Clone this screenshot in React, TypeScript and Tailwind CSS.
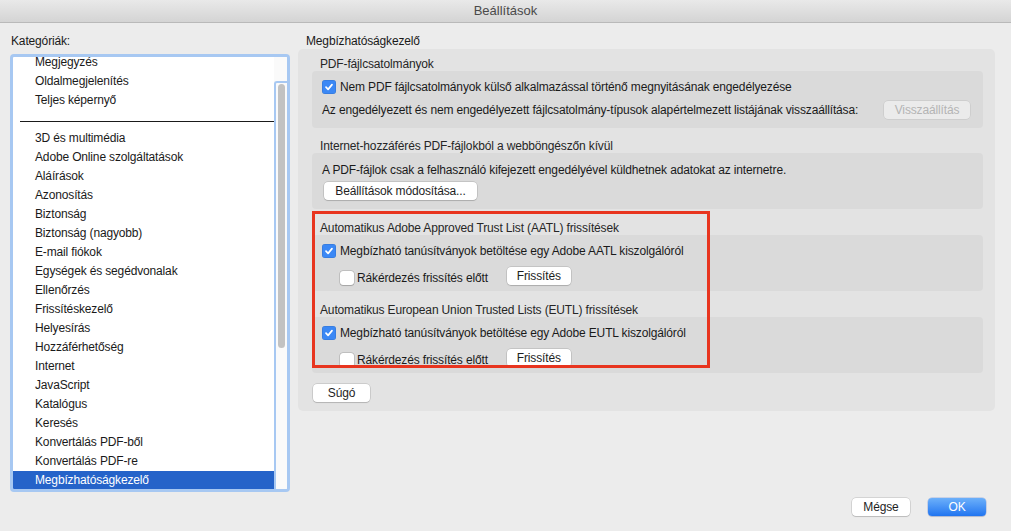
import React from 'react'

const FONT = "font-['Liberation_Sans','Helvetica_Neue',Arial,sans-serif]"

const CATEGORIES_TOP = ['Megjegyzés', 'Oldalmegjelenítés', 'Teljes képernyő']
const CATEGORIES = [
  '3D és multimédia',
  'Adobe Online szolgáltatások',
  'Aláírások',
  'Azonosítás',
  'Biztonság',
  'Biztonság (nagyobb)',
  'E-mail fiókok',
  'Egységek és segédvonalak',
  'Ellenőrzés',
  'Frissítéskezelő',
  'Helyesírás',
  'Hozzáférhetőség',
  'Internet',
  'JavaScript',
  'Katalógus',
  'Keresés',
  'Konvertálás PDF-ből',
  'Konvertálás PDF-re',
]

function Checkbox({ checked }: { checked?: boolean }) {
  if (checked) {
    return (
      <span className="w-[14px] h-[14px] rounded-[3px] bg-[#3b88f5] flex items-center justify-center shrink-0 shadow-[inset_0_0_0_0.5px_rgba(0,0,0,0.15)]">
        <svg width="10" height="10" viewBox="0 0 10 10">
          <path d="M2 5.2 L4.1 7.4 L8 2.6" fill="none" stroke="white" strokeWidth="1.7" strokeLinecap="round" strokeLinejoin="round" />
        </svg>
      </span>
    )
  }
  return (
    <span className="w-[14px] h-[14px] rounded-[3px] bg-white shrink-0 shadow-[0_0_0_0.5px_rgba(0,0,0,0.22),0_0.5px_1px_rgba(0,0,0,0.15)]" />
  )
}

function Button({ children, className = '', disabled }: { children: React.ReactNode; className?: string; disabled?: boolean }) {
  return (
    <div
      className={`h-[18px] rounded-[4px] flex items-center justify-center text-[12px] leading-none shrink-0 ${
        disabled
          ? 'bg-[#ebebeb] text-[#b4b4b4] shadow-[0_0_0_0.5px_rgba(0,0,0,0.1)]'
          : 'bg-white text-[#1e1e1e] shadow-[0_0_0_0.5px_rgba(0,0,0,0.2),0_1px_1px_rgba(0,0,0,0.12)]'
      } ${className}`}
    >
      {children}
    </div>
  )
}

// title sits 7px above its group box
function SectionTitle({ children, pt }: { children: React.ReactNode; pt: string }) {
  return <div className={`${pt} pl-[22px] leading-[14px] text-[#262626]`}>{children}</div>
}

function Group({ children, className = '' }: { children: React.ReactNode; className?: string }) {
  return <div className={`ml-[14px] mr-[12px] rounded-[4px] bg-[#dadada] ${className}`}>{children}</div>
}

function TrustGroup({ server }: { server: string }) {
  return (
    <Group className="h-[56px] pt-[8px] pl-[10px] flex flex-col gap-[8px]">
      <div className="flex items-center gap-[4px] h-[16px]">
        <Checkbox checked />
        <span>Megbízható tanúsítványok betöltése egy Adobe {server} kiszolgálóról</span>
      </div>
      <div className="flex items-center h-[18px] pl-[18px]">
        <div className="flex items-center gap-[3px] mt-[4px]">
          <Checkbox />
          <span>Rákérdezés frissítés előtt</span>
        </div>
        <Button className="w-[64px] ml-[19px]">Frissítés</Button>
      </div>
    </Group>
  )
}

export default function App() {
  return (
    <div className={`w-[1011px] h-[531px] bg-[#ececec] flex flex-col overflow-hidden text-[12px] tracking-[-0.15px] text-[#1a1a1a] ${FONT}`}>
      {/* Title bar */}
      <div className="h-[23px] shrink-0 bg-gradient-to-b from-[#e9e9e9] to-[#d4d4d4] border-b border-[#b9b9b9] flex items-center justify-center text-[13px] tracking-normal text-[#4a4a4a]">
        Beállítások
      </div>

      <div className="flex pt-[11px] pl-[10px]">
        {/* Left column */}
        <div className="w-[280px] flex flex-col">
          <div className="leading-[15px] pl-[1px]">Kategóriák:</div>
          <div className="mt-[5px] h-[438px] rounded-[4px] border-[3px] border-[#a7c8f2] bg-white flex overflow-hidden">
            <div className="flex-1 flex flex-col overflow-hidden">
              <div className="-mt-[4px]">
                {CATEGORIES_TOP.map((c) => (
                  <div key={c} className="h-[19px] leading-[19px] pl-[22px]">{c}</div>
                ))}
                <div className="h-[19px] flex items-center pl-[7px]">
                  <div className="h-px w-full bg-[#1a1a1a] mt-[3px]" />
                </div>
                {CATEGORIES.map((c) => (
                  <div key={c} className="h-[19px] leading-[19px] pl-[22px]">{c}</div>
                ))}
                <div className="h-[19px] leading-[19px] pl-[22px] bg-[#2563c9] text-white">Megbízhatóságkezelő</div>
              </div>
            </div>
            <div className="w-[13px] bg-[#fafafa] pt-[24px] flex">
              <div className="flex-1 border-l-2 border-t-2 border-[#a7c8f2] rounded-tl-[3px] pl-[2px] pt-[1px]">
                <div className="w-[7px] h-[264px] rounded-full bg-[#c2c2c2]" />
              </div>
            </div>
          </div>
        </div>

        {/* Right column */}
        <div className="ml-[8px] w-[697px] flex flex-col">
          <div className="leading-[15px] pl-[8px]">Megbízhatóságkezelő</div>
          <div className="relative rounded-[5px] bg-[#e3e3e3] flex flex-col pb-[9px]">
            <SectionTitle pt="pt-[8px]">PDF-fájlcsatolmányok</SectionTitle>
            <Group className="h-[57px] pt-[8px] pl-[10px] pr-[12px] flex flex-col gap-[6px]">
              <div className="flex items-center gap-[4px] h-[16px]">
                <Checkbox checked />
                <span>Nem PDF fájlcsatolmányok külső alkalmazással történő megnyitásának engedélyezése</span>
              </div>
              <div className="flex items-center justify-between h-[18px]">
                <span>Az engedélyezett és nem engedélyezett fájlcsatolmány-típusok alapértelmezett listájának visszaállítása:</span>
                <Button disabled className="w-[86px] mr-[1px]">Visszaállítás</Button>
              </div>
            </Group>

            <SectionTitle pt="pt-[11px]">Internet-hozzáférés PDF-fájlokból a webböngészőn kívül</SectionTitle>
            <Group className="h-[56px] pt-[9px] pl-[10px] flex flex-col gap-[4px]">
              <div className="h-[16px] leading-[16px]">A PDF-fájlok csak a felhasználó kifejezett engedélyével küldhetnek adatokat az internetre.</div>
              <Button className="w-[153px] ml-[2px]">Beállítások módosítása...</Button>
            </Group>

            <SectionTitle pt="pt-[12px]">Automatikus Adobe Approved Trust List (AATL) frissítések</SectionTitle>
            <TrustGroup server="AATL" />

            <SectionTitle pt="pt-[12px]">Automatikus European Union Trusted Lists (EUTL) frissítések</SectionTitle>
            <TrustGroup server="EUTL" />

            <div className="pt-[11px] pl-[15px]">
              <Button className="w-[57px]">Súgó</Button>
            </div>

            {/* annotation highlight */}
            <div className="absolute left-[14px] top-[162px] w-[398px] h-[157px] border-[3px] border-[#e8351f] pointer-events-none" />
          </div>
        </div>
      </div>

      {/* Footer */}
      <div className="mt-[6px] flex justify-end gap-[18px] pr-[25px]">
        <Button className="w-[58px]">Mégse</Button>
        <div className="w-[58px] h-[18px] rounded-[4px] bg-gradient-to-b from-[#6cb0fa] to-[#1f74f0] text-white flex items-center justify-center leading-none shadow-[0_0_0_0.5px_rgba(0,60,200,0.3),0_1px_1px_rgba(0,0,0,0.12)]">
          OK
        </div>
      </div>
    </div>
  )
}
